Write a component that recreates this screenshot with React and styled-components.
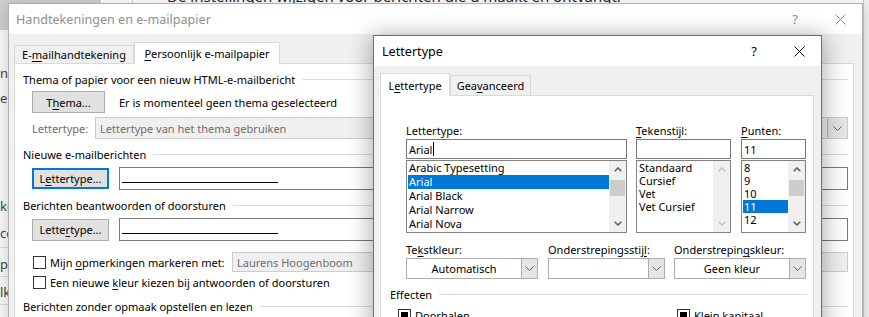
import React from 'react';
import styled, { createGlobalStyle } from 'styled-components';

const UI = `"Noto Sans", "Open Sans", "DejaVu Sans", sans-serif`;

const Global = createGlobalStyle`
  html, body { margin: 0; padding: 0; background: #fff; }
  body { width: 869px; height: 317px; overflow: hidden; font-family: ${UI}; font-size: 11px; color: #000; }
  * { box-sizing: border-box; }
  u { text-underline-offset: 2px; text-decoration-thickness: 1px; }
`;

const Desktop = styled.div`
  position: relative;
  width: 869px;
  height: 317px;
  overflow: hidden;
  background: #fff;
`;

/* ---------- background Outlook options window ---------- */
const BackWindow = styled.div`
  position: absolute;
  left: 0;
  top: 0;
  width: 869px;
  height: 317px;
  display: flex;
  background: #fff;
`;
const BackNav = styled.div`
  width: 101px;
  display: flex;
  flex-direction: column;
  background: #f7f7f7;
  border-right: 1px solid #d5d5d5;
`;
const NavSelected = styled.div`
  height: 30px;
  background: #cfcfcf;
`;
const NavItem = styled.div`
  margin-top: ${p => p.$mt}px;
  height: 16px;
  line-height: 16px;
  font-size: 13px;
  color: #444;
  white-space: nowrap;
`;
const NavSep = styled.div`
  margin-top: ${p => p.$mt}px;
  height: 1px;
  background: #d9d9d9;
`;
const BackGutter = styled.div`
  width: 32px;
  border-right: 1px solid #d5d5d5;
`;
const BackMain = styled.div`
  flex: 1;
  padding-left: 34px;
`;
const BackHeader = styled.div`
  margin-top: -12px;
  font-size: 15px;
  line-height: 16px;
  color: #262626;
  white-space: nowrap;
`;
const BackEdge = styled.div`
  width: 6px;
  background: #f0f0f0;
  border-left: 1px solid #c8c8c8;
`;

/* ---------- dialog windows ---------- */
const Window = styled.div`
  position: absolute;
  left: ${p => p.$x}px;
  top: ${p => p.$y}px;
  width: ${p => p.$w}px;
  height: ${p => p.$h}px;
  display: flex;
  flex-direction: column;
  background: #f0f0f0;
  border: 1px solid ${p => (p.$active ? '#6f6f6f' : '#b0b0b0')};
  box-shadow: ${p => (p.$active ? '0 3px 22px 2px rgba(0,0,0,0.33)' : '0 2px 14px rgba(0,0,0,0.18)')};
`;
const TitleBar = styled.div`
  height: 30px;
  flex: none;
  display: flex;
  align-items: center;
  background: #fff;
  padding-left: ${p => p.$pad}px;
`;
const TitleText = styled.div`
  flex: 1;
  font-size: 12.6px;
  color: ${p => (p.$active ? '#000' : '#8f8f8f')};
`;
const TitleBtn = styled.div`
  width: ${p => p.$w}px;
  height: 30px;
  display: flex;
  align-items: center;
  justify-content: center;
  font-size: 13px;
  color: ${p => (p.$active ? '#000' : '#8f8f8f')};
`;
const Body = styled.div`
  flex: 1;
  display: flex;
  flex-direction: column;
  padding: ${p => p.$pad};
`;
const TabStrip = styled.div`
  display: flex;
  align-items: flex-end;
  position: relative;
  z-index: 1;
  margin-bottom: -1px;
`;
const Tab = styled.div`
  width: ${p => p.$w}px;
  height: ${p => p.$h}px;
  margin-bottom: ${p => (p.$active ? 0 : 1)}px;
  display: flex;
  align-items: center;
  justify-content: center;
  background: ${p => (p.$active ? '#fff' : '#f0f0f0')};
  border: 1px solid #d9d9d9;
  border-bottom: none;
  white-space: nowrap;
`;
const Panel = styled.div`
  flex: 1;
  display: flex;
  flex-direction: column;
  background: #fff;
  border: 1px solid #d9d9d9;
  padding: ${p => p.$pad};
`;

/* ---------- generic controls ---------- */
const GroupHead = styled.div`
  display: flex;
  align-items: center;
  height: 16px;
  margin-top: ${p => p.$mt || 0}px;
  white-space: nowrap;
  &::after {
    content: '';
    flex: 1;
    height: 1px;
    margin-left: 7px;
    background: #dcdcdc;
  }
`;
const Row = styled.div`
  display: flex;
  align-items: center;
  height: ${p => p.$h}px;
  margin-top: ${p => p.$mt || 0}px;
  margin-left: ${p => p.$ml || 0}px;
`;
const PushButton = styled.div`
  width: ${p => p.$w}px;
  height: ${p => p.$h}px;
  flex: none;
  display: flex;
  align-items: center;
  justify-content: center;
  background: #e1e1e1;
  border: ${p => (p.$focus ? '2px solid #0078d7' : '1px solid #adadad')};
`;
const Note = styled.div`
  margin-left: 14px;
  white-space: nowrap;
`;
const FieldLabel = styled.div`
  width: ${p => p.$w}px;
  flex: none;
  color: ${p => (p.$disabled ? '#6d6d6d' : '#000')};
  white-space: nowrap;
`;
const DisabledField = styled.div`
  flex: 1;
  height: ${p => p.$h}px;
  display: flex;
  align-items: center;
  padding-left: 4px;
  background: #f0f0f0;
  border: 1px solid #cccccc;
  color: #6d6d6d;
  white-space: nowrap;
`;
const FieldText = styled.div`
  flex: 1;
`;
const DropBtn = styled.div`
  width: ${p => p.$w}px;
  align-self: stretch;
  display: flex;
  align-items: center;
  justify-content: center;
  background: #e5e5e5;
  border-left: 1px solid ${p => p.$border};
`;
const Preview = styled.div`
  flex: 1;
  align-self: stretch;
  margin-left: 10px;
  display: flex;
  align-items: flex-start;
  background: #fff;
  border: 1px solid #7a7a7a;
  padding: 14px 0 0 2px;
`;
const PreviewLine = styled.div`
  width: 156px;
  height: 1px;
  background: #000;
`;
const Check = styled.span`
  width: 13px;
  height: 13px;
  flex: none;
  display: inline-flex;
  align-items: center;
  justify-content: center;
  margin-left: ${p => p.$ml || 0}px;
  background: #fff;
  border: 1px solid #333;
  &::after {
    content: '';
    display: ${p => (p.$mixed ? 'block' : 'none')};
    width: 7px;
    height: 7px;
    background: #000;
  }
`;
const CheckLabel = styled.div`
  margin-left: 4px;
  width: ${p => (p.$w ? `${p.$w}px` : 'auto')};
  flex: none;
  white-space: nowrap;
`;

/* ---------- font dialog parts ---------- */
const Columns = styled.div`
  display: flex;
  margin-left: 16px;
`;
const Column = styled.div`
  width: ${p => p.$w}px;
  margin-left: ${p => p.$ml || 0}px;
  display: flex;
  flex-direction: column;
`;
const ColLabel = styled.div`
  height: 15px;
  line-height: 15px;
  margin-top: ${p => p.$mt || 0}px;
  margin-bottom: 1px;
  white-space: nowrap;
`;
const TextBox = styled.div`
  height: 20px;
  display: flex;
  align-items: center;
  padding-left: 2px;
  background: #fff;
  border: 1px solid #7a7a7a;
`;
const Caret = styled.span`
  display: inline-block;
  width: 1px;
  height: 14px;
  margin-left: 1px;
  background: #000;
`;
const ListBox = styled.div`
  height: 73px;
  margin-top: 1px;
  display: flex;
  background: #fff;
  border: 1px solid #828282;
`;
const ListItems = styled.div`
  flex: 1;
  padding-left: 1px;
  overflow: hidden;
`;
const ListItem = styled.div`
  height: ${p => p.$rh}px;
  line-height: ${p => p.$rh}px;
  padding-left: 1px;
  white-space: nowrap;
  overflow: hidden;
  background: ${p => (p.$sel ? '#0078d7' : 'transparent')};
  color: ${p => (p.$sel ? '#fff' : '#000')};
`;
const ScrollBar = styled.div`
  width: 17px;
  display: flex;
  flex-direction: column;
  background: #f0f0f0;
`;
const ScrollArrow = styled.div`
  height: 17px;
  display: flex;
  align-items: center;
  justify-content: center;
`;
const Track = styled.div`
  flex: 1;
  padding-top: 2px;
`;
const Thumb = styled.div`
  height: 16px;
  margin: 0 1px;
  background: #cdcdcd;
`;
const Combo = styled.div`
  width: ${p => p.$w}px;
  margin-left: ${p => p.$ml || 0}px;
  height: 21px;
  display: flex;
  background: #fff;
  border: 1px solid #adadad;
`;
const ComboValue = styled.div`
  flex: 1;
  display: flex;
  align-items: center;
  justify-content: center;
  white-space: nowrap;
`;

const CloseIcon = ({ color }) => (
  <svg width="11" height="11" viewBox="0 0 11 11">
    <path d="M0.5 0.5L10.5 10.5M10.5 0.5L0.5 10.5" stroke={color} strokeWidth="1" fill="none" />
  </svg>
);
const Chevron = () => (
  <svg width="9" height="5" viewBox="0 0 9 5">
    <path d="M0.5 0.5L4.5 4.5L8.5 0.5" stroke="#606060" strokeWidth="1" fill="none" />
  </svg>
);
const ArrowUp = ({ off }) => (
  <svg width="8" height="5" viewBox="0 0 8 5">
    <path d="M0.7 4.3L4 1L7.3 4.3" stroke={off ? '#c4c4c4' : '#606060'} strokeWidth="1.6" fill="none" />
  </svg>
);
const ArrowDown = ({ off }) => (
  <svg width="8" height="5" viewBox="0 0 8 5">
    <path d="M0.7 0.7L4 4L7.3 0.7" stroke={off ? '#c4c4c4' : '#606060'} strokeWidth="1.6" fill="none" />
  </svg>
);

const List = ({ items, sel, rh, thumb, off }) => (
  <ListBox>
    <ListItems>
      {items.map(t => (
        <ListItem key={t} $rh={rh} $sel={t === sel}>{t}</ListItem>
      ))}
    </ListItems>
    <ScrollBar>
      <ScrollArrow><ArrowUp off={off} /></ScrollArrow>
      <Track>{thumb && <Thumb />}</Track>
      <ScrollArrow><ArrowDown off={off} /></ScrollArrow>
    </ScrollBar>
  </ListBox>
);

export default function App() {
  return (
    <>
      <Global />
      <Desktop>
        <BackWindow>
          <BackNav>
            <NavSelected />
            <NavItem $mt={35}>n</NavItem>
            <NavItem $mt={9}>en</NavItem>
            <NavItem $mt={92}>ke</NavItem>
            <NavItem $mt={11}>ce</NavItem>
            <NavSep $mt={6} />
            <NavItem $mt={8}>p</NavItem>
            <NavSep $mt={4} />
            <NavItem $mt={7}>lk</NavItem>
            <NavSep $mt={4} />
          </BackNav>
          <BackGutter />
          <BackMain>
            <BackHeader>De instellingen wijzigen voor berichten die u maakt en ontvangt.</BackHeader>
          </BackMain>
          <BackEdge />
        </BackWindow>

        <Window $x={8} $y={3} $w={855} $h={340}>
          <TitleBar $pad={7}>
            <TitleText>Handtekeningen en e-mailpapier</TitleText>
            <TitleBtn $w={46}>?</TitleBtn>
            <TitleBtn $w={44}><CloseIcon color="#8f8f8f" /></TitleBtn>
          </TitleBar>
          <Body $pad="8px 8px 0 5px">
            <TabStrip>
              <Tab $w={120} $h={18}>E-<u>m</u>ailhandtekening</Tab>
              <Tab $w={146} $h={22} $active><u>P</u>ersoonlijk e-mailpapier</Tab>
            </TabStrip>
            <Panel $pad="7px 5px 0 8px">
              <GroupHead>Thema of papier voor een nieuw HTML-e-mailbericht</GroupHead>
              <Row $h={22} $mt={4} $ml={9}>
                <PushButton $w={73} $h={22}>T<u>h</u>ema...</PushButton>
                <Note>Er is momenteel geen thema geselecteerd</Note>
              </Row>
              <Row $h={22} $mt={4} $ml={9}>
                <FieldLabel $w={63} $disabled>Lettertype:</FieldLabel>
                <DisabledField $h={22}>
                  <FieldText>Lettertype van het thema gebruiken</FieldText>
                  <DropBtn $w={20} $border="#b5b5b5"><Chevron /></DropBtn>
                </DisabledField>
              </Row>
              <GroupHead $mt={7}>Nieuwe e-mailberichten</GroupHead>
              <Row $h={23} $mt={5} $ml={9}>
                <PushButton $w={77} $h={21} $focus>L<u>e</u>ttertype...</PushButton>
                <Preview><PreviewLine /></Preview>
              </Row>
              <GroupHead $mt={7}>Berichten beantwoorden of doorsturen</GroupHead>
              <Row $h={23} $mt={5} $ml={9}>
                <PushButton $w={77} $h={22}>Lette<u>r</u>type...</PushButton>
                <Preview><PreviewLine /></Preview>
              </Row>
              <Row $h={20} $mt={11} $ml={10}>
                <Check />
                <CheckLabel $w={182}>Mijn <u>o</u>pmerkingen markeren met:</CheckLabel>
                <DisabledField $h={20}>Laurens Hoogenboom</DisabledField>
              </Row>
              <Row $h={20} $ml={10}>
                <Check />
                <CheckLabel>Een nieuwe <u>k</u>leur kiezen bij antwoorden of doorsturen</CheckLabel>
              </Row>
              <GroupHead $mt={6}>Berichten zonder opmaak opstellen en lezen</GroupHead>
            </Panel>
          </Body>
        </Window>

        <Window $x={373} $y={35} $w={449} $h={300} $active>
          <TitleBar $pad={8}>
            <TitleText $active>Lettertype</TitleText>
            <TitleBtn $w={46} $active>?</TitleBtn>
            <TitleBtn $w={44} $active><CloseIcon color="#000" /></TitleBtn>
          </TitleBar>
          <Body $pad="7px 7px 0 6px">
            <TabStrip>
              <Tab $w={70} $h={23} $active>L<u>e</u>ttertype</Tab>
              <Tab $w={81} $h={20}>Gea<u>v</u>anceerd</Tab>
            </TabStrip>
            <Panel $pad="27px 6px 0 9px">
              <Columns>
                <Column $w={221}>
                  <ColLabel>Lettertype:</ColLabel>
                  <TextBox>Arial<Caret /></TextBox>
                  <List
                    items={['Arabic Typesetting', 'Arial', 'Arial Black', 'Arial Narrow', 'Arial Nova']}
                    sel="Arial"
                    rh={14}
                    thumb
                  />
                </Column>
                <Column $w={95} $ml={9}>
                  <ColLabel><u>T</u>ekenstijl:</ColLabel>
                  <TextBox />
                  <List items={['Standaard', 'Cursief', 'Vet', 'Vet Cursief']} rh={13} off />
                </Column>
                <Column $w={65} $ml={10}>
                  <ColLabel><u>P</u>unten:</ColLabel>
                  <TextBox>11</TextBox>
                  <List items={['8', '9', '10', '11', '12']} sel="11" rh={13} thumb />
                </Column>
              </Columns>
              <Columns>
                <Column $w={132}>
                  <ColLabel $mt={9}>Te<u>k</u>stkleur:</ColLabel>
                </Column>
                <Column $w={117} $ml={10}>
                  <ColLabel $mt={9}>Onderstrepingsstij<u>l</u>:</ColLabel>
                </Column>
                <Column $w={132} $ml={9}>
                  <ColLabel $mt={9}>Onderstrepin<u>g</u>skleur:</ColLabel>
                </Column>
              </Columns>
              <Columns>
                <Combo $w={132}>
                  <ComboValue>Automatisch</ComboValue>
                  <DropBtn $w={16} $border="#adadad"><Chevron /></DropBtn>
                </Combo>
                <Combo $w={117} $ml={10}>
                  <ComboValue />
                  <DropBtn $w={16} $border="#adadad"><Chevron /></DropBtn>
                </Combo>
                <Combo $w={132} $ml={9}>
                  <ComboValue>Geen kleur</ComboValue>
                  <DropBtn $w={16} $border="#adadad"><Chevron /></DropBtn>
                </Combo>
              </Columns>
              <GroupHead $mt={7}>Effecten</GroupHead>
              <Row $h={14} $mt={6}>
                <Check $mixed $ml={8} />
                <CheckLabel $w={262}><u>D</u>oorhalen</CheckLabel>
                <Check $mixed />
                <CheckLabel><u>K</u>lein kapitaal</CheckLabel>
              </Row>
            </Panel>
          </Body>
        </Window>
      </Desktop>
    </>
  );
}
